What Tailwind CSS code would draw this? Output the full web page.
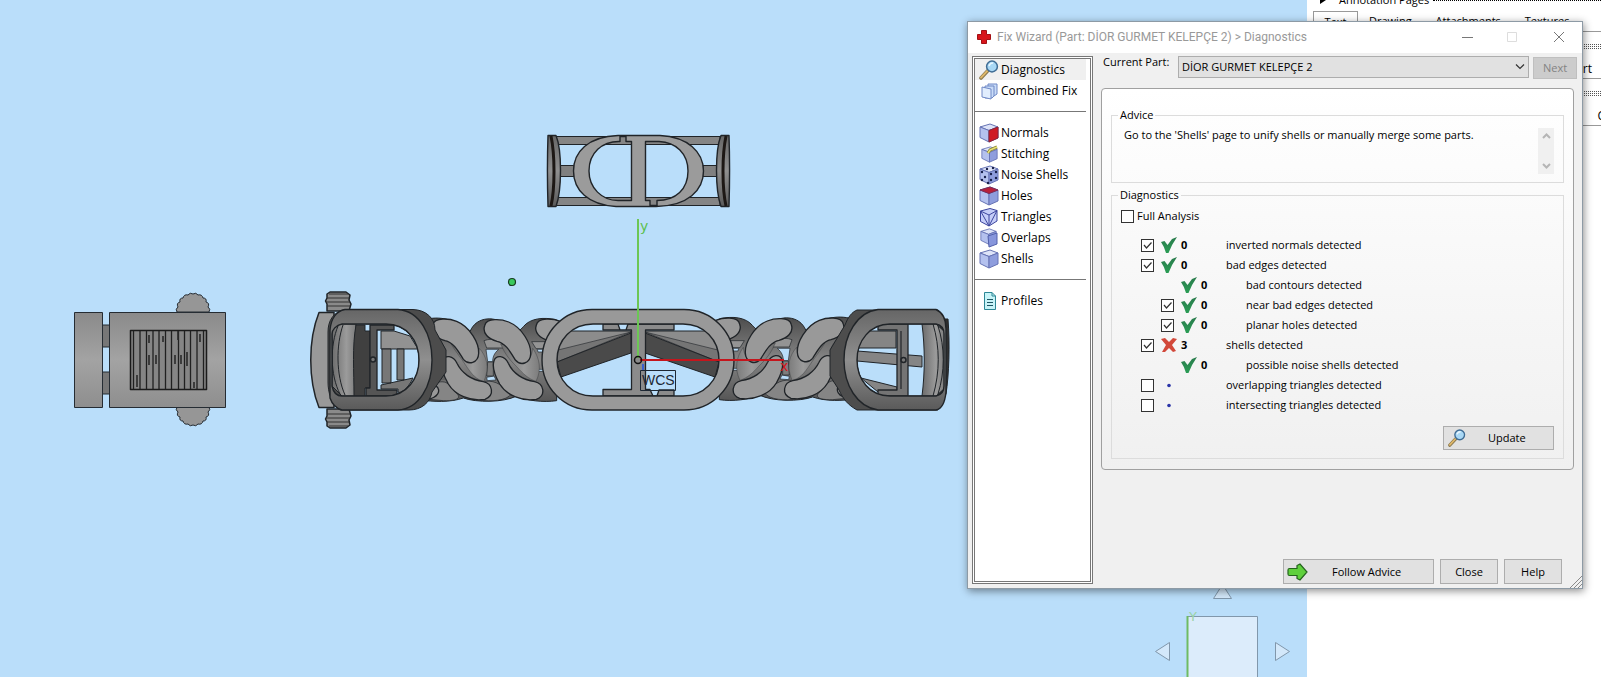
<!DOCTYPE html>
<html lang="en">
<head>
  <meta charset="UTF-8">
  <meta name="viewport" content="width=device-width, initial-scale=1.0">
  <title>Fix Wizard</title>
  <script src="https://cdn.jsdelivr.net/npm/@tailwindcss/browser@4"></script>
</head>
<body class="relative flex h-screen overflow-hidden bg-white font-['Open_Sans',sans-serif] text-[11px] leading-4 text-black">

  <!-- Shared icons -->
  <svg class="absolute size-0">
    <defs>
      <linearGradient id="metal" x1="0" y1="0" x2="0" y2="1">
        <stop offset="0" stop-color="#8a8a8a"/><stop offset=".5" stop-color="#a3a3a3"/><stop offset="1" stop-color="#8e8e8e"/>
      </linearGradient>
      <linearGradient id="dark" x1="0" y1="0" x2="0" y2="1">
        <stop offset="0" stop-color="#4c4c4c"/><stop offset=".5" stop-color="#858585"/><stop offset="1" stop-color="#565656"/>
      </linearGradient>
      <linearGradient id="round" x1="0" y1="0" x2="1" y2="0">
        <stop offset="0" stop-color="#6c6c6c"/><stop offset=".6" stop-color="#9b9b9b"/><stop offset="1" stop-color="#7c7c7c"/>
      </linearGradient>
      <linearGradient id="frame" x1="0" y1="0" x2="0" y2="1">
        <stop offset="0" stop-color="#666"/><stop offset=".5" stop-color="#8f8f8f"/><stop offset="1" stop-color="#5a5a5a"/>
      </linearGradient>
      <linearGradient id="tick" x1="0" y1="0" x2="0" y2="1">
        <stop offset="0" stop-color="#2a7a4c"/><stop offset="1" stop-color="#2a9d55"/>
      </linearGradient>
    </defs>
    <symbol id="i-lens" viewBox="0 0 20 20">
      <path d="M2 18 L8.500 11" stroke="#8b7a50" stroke-width="3.600" stroke-linecap="round"/>
      <path d="M2 17.600 L8.300 10.800" stroke="#e0b869" stroke-width="1.800" stroke-linecap="round"/>
      <circle cx="13" cy="6.500" r="5.400" fill="#a9d8f5" stroke="#3f6c94" stroke-width="1.500"/>
      <path d="M10 6 q1 -3 4 -3" fill="none" stroke="#eaf7ff" stroke-width="1.500"/>
    </symbol>
    <symbol id="i-cube" viewBox="0 0 20 20">
      <path d="M1 4 L11 1 L19 4 L10 7.500 Z" fill="#dde3f8" stroke="#6673b4"/>
      <path d="M1 4 L10 7.500 V19 L1 14.500 Z" fill="#b4c1ee" stroke="#6673b4"/>
      <path d="M10 7.500 L19 4 V15 L10 19 Z" fill="#8e9ddd" stroke="#6673b4"/>
    </symbol>
    <symbol id="i-check" viewBox="0 0 16 16">
      <path d="M0 5 L3.500 4 L6.500 8 L11 2 L16 0 Q11 7 7.500 16 H5 Q3.500 10 0 5 Z" fill="url(#tick)"/>
    </symbol>
    <symbol id="i-tick" viewBox="0 0 13 13">
      <path d="M3 6 L5.500 9 L10.500 3.500" fill="none" stroke="#333" stroke-width="1.200"/>
    </symbol>
  </svg>

  <!-- 3D view -->
  <main class="min-w-0 flex-1 bg-[#badefa]">
    <svg class="h-full w-full" viewBox="0 0 1307 677" preserveAspectRatio="xMinYMin slice" stroke-linejoin="round">
      <!-- Side view -->
      <g stroke="#252c33" stroke-width="1">
        <path id="knob" d="M177 312 q-2 -3 1 -5 q-2 -4 2 -5 q-1 -4 3 -4 q1 -4 5 -3 q2 -3 5 -1 q3 -2 5 1 q4 -1 5 3 q4 0 3 4 q4 1 2 5 q3 2 1 5 Z" fill="#969696"/>
        <use href="#knob" transform="translate(0 719) scale(1 -1)"/>
        <rect x="102" y="325" width="8" height="22" fill="#777"/>
        <rect x="102" y="372" width="8" height="22" fill="#777"/>
        <rect x="74.500" y="312.500" width="28" height="95" fill="url(#metal)"/>
        <rect x="109.500" y="312.500" width="116" height="95" fill="url(#metal)"/>
        <rect x="130.500" y="330.500" width="76" height="59" fill="#858585" stroke="#1b1b1b" stroke-width="1.500"/>
        <path d="M133.500 331V389M140 331V389M146.500 331V389M153 331V389M159 331V389M165.500 331V389M171.500 331V389M178.500 331V389M184.500 331V389M190.500 331V389M197 331V389M203.500 331V389" stroke="#202020" stroke-width="1.300"/>
        <path d="M149 355v10M156 355v9M175 355v9M181 355v9M137 375v12M149 335v8M163 336v6M187 352v14M178 331v9M194 382v6M200 334v8" stroke="#2a2a2a" stroke-width="1.600"/>
      </g>

      <!-- Front plate with the CD emblem -->
      <g stroke="#202428" stroke-width="1">
        <path d="M556 136.500H720V144.500H556ZM556 197.500H720V205.500H556Z" fill="#858585"/>
        <path d="M559 165.500H574V176.500H559ZM703 165.500H718V176.500H703Z" fill="#808080"/>
        <path fill-rule="evenodd" fill="#9b9b9b" stroke-width="1.400" d="M618 135.500H660C688 137 703.500 152 703.500 171C703.500 190 688 206 656 206.500H616C588 205 573.500 190 573.500 171C573.500 152 588 136.500 618 135.500ZM620 141.500C602 141 589 153 589 171C589 188 602 200.500 618 200.500H631.500V141.500H626V136.500H620ZM645.500 141.500V200.500H650V205.500H657V200.500C676 200.500 688 189 688 171C688 154 676 142 659 141.500Z"/>
        <path id="plate" d="M548 135.500H556C562 150 562 190 556 206.500H548C547.500 190 547.500 150 548 135.500Z" fill="url(#frame)" stroke-width="1.400"/>
        <path id="plateEdge" d="M551 136C555 155 555 188 551 206" fill="none" stroke="#1d1815" stroke-width="3"/>
        <use href="#plate" transform="translate(1277 0) scale(-1 1)"/>
        <use href="#plateEdge" transform="translate(1277 0) scale(-1 1)"/>
      </g>

      <!-- Chain half, mirrored for the right side -->
      <g id="chain" transform="translate(290 270) scale(.33333)" stroke="#202428" stroke-width="3">
        <path d="M400 150C450 135 500 150 540 185C560 135 620 140 650 165C690 190 690 180 700 170C720 145 760 140 800 150V392C760 398 710 392 680 378C640 398 560 398 520 384C480 398 430 395 390 390Z" fill="url(#dark)"/>
        <path d="M415 225C425 180 455 210 468 240V330H415Z" fill="#5f5f5f" stroke="none"/>
        <path d="M582 212C610 202 640 210 640 234H590ZM725 215H790V236H738Z" fill="#949494" stroke-width="2"/>
        <path d="M588 238H626C612 250 608 262 608 275H593ZM590 322L612 318L618 330L592 332ZM742 238H762V246H744ZM744 298H762V304H744Z" fill="#badefa" stroke-width="2"/>
        <path d="M593 276H610V318H590Z" fill="#7d7d7d" stroke-width="2"/>
        <path d="M530 290C510 260 490 235 484 222C505 226 515 250 525 270C545 285 565 275 568 235C590 260 600 290 582 334C560 330 545 312 530 290Z" fill="url(#round)" stroke-width="1"/>
        <path d="M680 290C650 262 640 240 632 222C660 226 672 250 682 270C700 285 725 275 728 235C750 265 755 300 738 334C715 326 700 312 680 290Z" fill="url(#round)" stroke-width="1"/>
        <path d="M430 340C480 325 475 350 500 370C515 385 500 393 460 392L420 388ZM585 334C620 330 640 350 664 372C650 393 600 395 570 390Z" fill="#858585" stroke-width="2"/>
        <g fill="#999" stroke-width="4">
          <path id="linkTop" d="M428 165C433 140 480 146 500 154C540 170 568 220 566 250C565 280 535 286 520 268C503 240 490 217 465 212C440 205 420 188 428 165Z"/>
          <path id="linkLow" d="M458 272C464 254 490 255 501 280C515 310 545 330 580 335C608 341 615 376 585 388C540 395 495 375 475 342C458 312 452 290 458 272Z"/>
          <use href="#linkTop" transform="translate(156 2)"/>
          <use href="#linkLow" transform="translate(154 0)"/>
          <use href="#linkTop" transform="translate(311 0)"/>
          <use href="#linkLow" transform="translate(310 0)"/>
          <path d="M380 372C385 325 440 335 446 360C448 378 420 392 395 391Z"/>
        </g>
      </g>
      <use href="#chain" transform="translate(1276 -1) scale(-1 1)"/>

      <!-- Center link -->
      <g stroke="#202428" stroke-width="1">
        <rect x="556" y="322" width="164" height="76" rx="38" fill="#badefa"/>
        <g id="rods">
          <path d="M558 377C554 362 556 345 568 331H631V352Z" fill="#8c8c8c"/>
          <path d="M558 350L631 332L557 362Z" fill="#757575" stroke-width=".6"/>
          <path d="M557 362L631 333V353L561 377Z" fill="#4a4a4a"/>
        </g>
        <use href="#rods" transform="translate(1276 0) scale(-1 1)"/>
        <path d="M603 324H618L620 330H626L628 324H674V330H645.500V389.500H650L653 396H657L659 390H674V396H603V389.500H631.500V330H603Z" fill="#8b8b8b" stroke-width="1.300"/>
        <path fill-rule="evenodd" d="M592 309.500H684C712 309.500 734 332 734 360C734 388 712 410 684 410H592C564 410 542 388 542 360C542 332 564 309.500 592 309.500ZM593 324C572 324 557 340 557 360C557 380 572 396 593 396H683C704 396 719 380 719 360C719 340 704 324 683 324Z" fill="#999" stroke-width="1.400"/>
      </g>

      <!-- Left clasp -->
      <g stroke="#202428" stroke-width="1">
        <g id="screw">
          <path d="M330 292H346L350 295L349 300L351 304L349 311H327V304L325.500 301L327 298V294Z" fill="#8a8a8a" stroke-width="1.500"/>
          <path d="M329 294H348M327 298H349M326 302H350M327 306H350" stroke="#333"/>
        </g>
        <use href="#screw" transform="translate(0 720) scale(1 -1)"/>
        <path d="M319 312.500H334V407.500H319C308 380 308 340 319 312.500Z" fill="#999" stroke-width="1.500"/>
        <path d="M345 309.500H413C426 310 435 318 435 330L446 350V372L432 392C430 403 421 410 409 410H340C331 404 328 392 328 382V332C328 321 333 312 345 309.500Z" fill="#4c4c4c"/>
        <path d="M332 324H386C407 324 419 342 419 360C419 380 407 396 386 396H345L332 386Z" fill="#badefa"/>
        <path d="M332 330L340 324H356V396H342L332 386Z" fill="url(#round)"/>
        <path d="M338 326C330 345 330 375 340 394M343 325C336 345 336 375 345 395" fill="none"/>
        <path d="M356 325H365V331H370V388H365V396H354C354 372 352 346 356 325Z" fill="#404040"/>
        <path d="M370 325H394V330H377V390H397V396H366V388H370Z" fill="#555" stroke-width="1.300"/>
        <path d="M381 331H394L410 336L418 349H381Z" fill="#929292"/>
        <path d="M382 349H391V383H382ZM397 349H404V380H397ZM381 385L413 378C408 389 400 394 398 392V389H381Z" fill="#777"/>
        <circle cx="373" cy="359.500" r="2.500" fill="#777" stroke-width="1.500"/>
        <path fill-rule="evenodd" d="M345 309.500H398C420 311 432 335 432 360C432 386 419 409 398 410H342C335 408 332 404 330 398V330C331 318 337 311 345 309.500ZM342 324C336 325 332 330 332 334V386C333 391 336 396 342 396H386C407 396 419 378 419 360C419 341 407 324 386 324Z" fill="url(#frame)" stroke-width="1.400"/>
      </g>

      <!-- Right clasp -->
      <g stroke="#202428" stroke-width="1">
        <path d="M940 319H948C950 345 949 375 946 394L938 407Z" fill="#303030"/>
        <path d="M857 310H938V410H857C848 405 843 399 839 390L830 376V350L845 325C848 317 852 312 857 310Z" fill="#4d4d4d"/>
        <path d="M890 324H938V396H890C870 396 857 380 857 360C857 341 870 324 890 324Z" fill="#badefa"/>
        <path d="M866 331H896V348H858ZM857 351L922 356V367L857 361ZM861 378L897 387V392H878Z" fill="#858585"/>
        <path d="M878 324H908V396H878V390H897V330H878Z" fill="#747474" stroke-width="1.300"/>
        <path d="M901 331V389" stroke-width="1.200"/>
        <circle cx="903.500" cy="360" r="2.500" fill="#777" stroke-width="1.500"/>
        <path d="M922 324H936L945 332V388L936 396H922C925 372 925 348 922 324Z" fill="url(#round)"/>
        <path d="M933 324C940 347 940 372 933 396M938 326C945 347 945 372 938 394" fill="none"/>
        <path fill-rule="evenodd" d="M878 309.500H936C944 313 946 320 946 329V392C945 402 942 409 936 410H878C857 407 844 385 844 360C844 335 857 312 878 309.500ZM890 324C870 324 857 341 857 360C857 380 870 396 890 396H936C941 395 944 391 944 386V334C944 329 941 325 936 324Z" fill="url(#frame)" stroke-width="1.400"/>
      </g>

      <!-- Axes -->
      <path d="M638 219V358" stroke="#6cc655" stroke-width="2"/>
      <path d="M640 360H784" stroke="#c5151c" stroke-width="2"/>
      <circle cx="638" cy="360" r="3.500" fill="none" stroke="#111" stroke-width="1.500"/>
      <circle cx="512" cy="282" r="3.500" fill="#39c95d" stroke="#173b1f" stroke-width="1.200"/>
      <path d="M643 364V370" stroke="#3a60d0" stroke-width="2"/>
      <rect x="640.500" y="370.500" width="35" height="20" fill="none" stroke="#1d2733"/>
      <text x="642" y="385" class="font-['Liberation_Sans',sans-serif] text-[14px]" fill="#1d2733">WCS</text>
      <text x="640" y="231" class="font-['DejaVu_Sans',sans-serif] text-[14px]" fill="#5cc04e">y</text>
      <text x="780" y="371" class="font-['DejaVu_Sans',sans-serif] text-[14px]" fill="#d01820">x</text>

      <!-- View cube -->
      <g fill="#d3e8fa" stroke="#8197ab">
        <path d="M1155.500 651.500L1169.500 642.500V660.500ZM1289.500 651.500L1275.500 642.500V660.500ZM1213.500 598.500H1231.500L1222.500 584.500Z"/>
        <rect x="1187.500" y="616.500" width="70" height="70" fill="#dcecfb"/>
      </g>
      <path d="M1187.500 616V677" stroke="#6fbb62" stroke-width="2"/>
      <text x="1189" y="621" class="font-['DejaVu_Sans',sans-serif] text-[13px]" fill="#9bd3a5">Y</text>
    </svg>
  </main>

  <!-- Part pages panel -->
  <aside class="w-[294px] shrink-0 overflow-hidden">
    <div class="-mt-2 flex h-[19px] items-start gap-1 pl-3">
      <svg class="mt-1 size-2" viewBox="0 0 8 8"><path d="M1 0 L7 4 L1 8 Z"/></svg>
      <span class="pl-2">Annotation Pages</span>
      <span class="mt-2 flex-1 border-t border-dotted border-black"></span>
    </div>
    <div class="flex h-[21px] items-center border-b border-[#999] pl-[6px]">
      <button class="h-full w-[45px] border border-b-0 border-[#999]">Text</button>
      <button class="ml-[11px]">Drawing</button>
      <button class="ml-[24px]">Attachments</button>
      <button class="ml-[24px]">Textures</button>
    </div>
    <div class="flex h-[47px] flex-col items-end border-b border-[#999] pt-3 text-[12px]">
      <div class="w-full border-t border-dotted border-[#555]"></div>
      <div class="mt-px w-full border-t border-dotted border-[#555]"></div>
      <div class="mt-px w-full border-t border-dotted border-[#555]"></div>
      <span class="mt-3 pr-[9px]">Part</span>
    </div>
    <div class="flex h-[47px] flex-col items-end border-b border-[#999] pt-3 text-[12px]">
      <div class="w-full border-t border-dotted border-[#555]"></div>
      <div class="mt-px w-full border-t border-dotted border-[#555]"></div>
      <div class="mt-px w-full border-t border-dotted border-[#555]"></div>
      <span class="mt-3 -mr-1">C</span>
    </div>
  </aside>

  <!-- Fix Wizard window -->
  <section class="absolute top-[21px] right-[18px] w-[616px] border border-[#8d9aa5] bg-[#f0f0f0] shadow-[1px_2px_8px_rgba(0,0,0,0.45)]">
    <header class="flex h-[31px] items-center bg-white pr-[17px] pb-px pl-[9px] text-[#999]">
      <svg class="mr-[6px] size-[14px]" viewBox="0 0 14 14"><path d="M4.500 .5H9.500V4.500H13.500V9.500H9.500V13.500H4.500V9.500H.5V4.500H4.500Z" fill="#d8151b" stroke="#a31014"/></svg>
      <h1 class="flex-1 font-['Roboto',sans-serif] text-[12px]">Fix Wizard (Part: DİOR GURMET KELEPÇE 2) &gt; Diagnostics</h1>
      <button class="mr-[34px]" aria-label="Minimize"><svg class="h-3 w-[11px]" viewBox="0 0 11 12"><path d="M0 6.500H11" stroke="#777"/></svg></button>
      <button class="mr-[36px]" aria-label="Maximize"><svg class="size-[10px]" viewBox="0 0 10 10"><path d="M.5 .5H9.500V9.500H.5Z" fill="none" stroke="#ddd"/></svg></button>
      <button aria-label="Close window"><svg class="size-[12px]" viewBox="0 0 12 12"><path d="M1 1L11 11M11 1L1 11" stroke="#777"/></svg></button>
    </header>

    <div class="flex pt-[3px] pb-1 pl-1">
      <!-- Pages -->
      <nav class="w-[121px] shrink-0 border-[3px] border-double border-[#777] bg-white pr-1 text-[12px]">
        <a href="#" class="flex h-[21px] items-center gap-[2px] bg-[#f0f0f0] pl-1"><svg class="size-[20px]"><use href="#i-lens"/></svg>Diagnostics</a>
        <a href="#" class="flex h-[21px] items-center gap-[2px] pl-1">
          <svg class="size-[20px]" viewBox="0 0 20 20"><g fill="#c9dcf8" stroke="#7089c6"><path d="M9 3H18V13L15 15H9Z"/><path d="M6 5H15V15L13 17H6Z"/><path d="M3 6L12 8V18L3 16Z" fill="#e1edfd"/></g></svg>Combined Fix</a>
        <hr class="mt-[10px] mb-[10px] border-[#777]">
        <a href="#" class="flex h-[21px] items-center gap-[2px] pl-1">
          <svg class="size-[20px]" viewBox="0 0 20 20"><use href="#i-cube"/><path d="M10 7.500L19 4V15L10 19Z" fill="#cf1a24" stroke="#8d2338"/></svg>Normals</a>
        <a href="#" class="flex h-[21px] items-center gap-[2px] pl-1">
          <svg class="size-[20px]" viewBox="0 0 20 20"><use href="#i-cube" x="2" y="2" width="17" height="17"/><path d="M9 9L11 6L18 3" fill="none" stroke="#8a8530" stroke-width="3"/><path d="M9 9L11 6L18 3" fill="none" stroke="#e8e27a" stroke-width="1.500"/></svg>Stitching</a>
        <a href="#" class="flex h-[21px] items-center gap-[2px] pl-1">
          <svg class="size-[20px]" viewBox="0 0 20 20"><use href="#i-cube"/><g fill="#18204a"><circle cx="3" cy="7" r="1.200"/><circle cx="8" cy="4" r="1.200"/><circle cx="14" cy="3" r="1.200"/><circle cx="6" cy="12" r="1.200"/><circle cx="3" cy="15" r="1.200"/><circle cx="12" cy="9" r="1.200"/><circle cx="17" cy="7" r="1.200"/><circle cx="12" cy="15" r="1.200"/><circle cx="17" cy="13" r="1.200"/><circle cx="9" cy="18" r="1.200"/></g></svg>Noise Shells</a>
        <a href="#" class="flex h-[21px] items-center gap-[2px] pl-1">
          <svg class="size-[20px]" viewBox="0 0 20 20"><use href="#i-cube"/><path d="M1 4L11 1L19 4L10 7.500Z" fill="#b8203a" stroke="#7c2c58"/></svg>Holes</a>
        <a href="#" class="flex h-[21px] items-center gap-[2px] pl-1">
          <svg class="size-[20px]" viewBox="0 0 20 20"><path d="M1.500 4L11 1.500L18 3.500V14L10 19L1.500 14.500Z" fill="#c5cdf8" stroke="#3d469e"/><path d="M1.500 4L10 8L18 3.500M10 8V19M1.500 4L10 19L18 3.500" fill="none" stroke="#3d469e"/></svg>Triangles</a>
        <a href="#" class="flex h-[21px] items-center gap-[2px] pl-1">
          <svg class="size-[20px]" viewBox="0 0 20 20"><use href="#i-cube" x="1" y="0" width="17" height="17"/><path d="M9 8L18 5V16L10 19Z" fill="#8796dc" stroke="#5361ab"/></svg>Overlaps</a>
        <a href="#" class="flex h-[21px] items-center gap-[2px] pl-1"><svg class="size-[20px]"><use href="#i-cube"/></svg>Shells</a>
        <hr class="mt-[10px] mb-[10px] border-[#777]">
        <a href="#" class="flex h-[21px] items-center gap-[2px] pl-1">
          <svg class="size-[20px]" viewBox="0 0 20 20"><path d="M5.500 1.500H13L16.500 5V18.500H5.500Z" fill="#c8f4f8" stroke="#2d8795"/><path d="M13 1.500V5H16.500" fill="none" stroke="#2d8795"/><path d="M8 8.500H14M8 11.500H14M8 14.500H14" stroke="#1e5663"/></svg>Profiles</a>
      </nav>

      <!-- Diagnostics page -->
      <div class="ml-2 min-w-0 flex-1 pr-[5px]">
        <div class="flex items-start">
          <label for="part" class="w-[77px] pl-[2px] leading-3">Current Part:</label>
          <div class="relative flex-1">
            <select id="part" class="h-[22px] w-full appearance-none border border-[#adadad] bg-[#e1e1e1] pl-[3px] leading-5">
              <option>DİOR GURMET KELEPÇE 2</option>
            </select>
            <svg class="pointer-events-none absolute top-2 right-1 h-[6px] w-[10px]" viewBox="0 0 10 6"><path d="M1 .5L5 4.500L9 .5" fill="none" stroke="#333" stroke-width="1.200"/></svg>
          </div>
          <button disabled class="mt-px ml-1 h-[22px] w-[44px] border border-[#bfbfbf] bg-[#ccc] text-[#838383]">Next</button>
        </div>

        <div class="mt-[9px] mr-[3px] rounded border border-[#a0a0a0] bg-linear-to-b from-white to-[#f0f0f0] px-[9px] pt-[18px] pb-[10px]">
          <fieldset class="border border-[#dcdcdc] pb-2">
            <legend class="ml-[6px] px-[2px]">Advice</legend>
            <div class="flex items-start justify-between pt-1 pr-[9px] pl-3">
              <p>Go to the 'Shells' page to unify shells or manually merge some parts.</p>
              <div class="mt-px flex h-[46px] w-4 flex-col items-center justify-between bg-[#f0f0f0] py-1">
                <button aria-label="Scroll up"><svg class="h-2 w-[9px]" viewBox="0 0 9 8"><path d="M1 6L4.500 2.500L8 6" fill="none" stroke="#b5b5b5" stroke-width="2"/></svg></button>
                <button aria-label="Scroll down"><svg class="h-2 w-[9px]" viewBox="0 0 9 8"><path d="M1 2L4.500 5.500L8 2" fill="none" stroke="#b5b5b5" stroke-width="2"/></svg></button>
              </div>
            </div>
          </fieldset>

          <fieldset class="mt-1 border border-[#dcdcdc] pb-2">
            <legend class="ml-[6px] px-[2px]">Diagnostics</legend>
            <label class="mt-[3px] flex h-5 items-center gap-[3px] pl-[9px]">
              <input type="checkbox" class="size-[13px] appearance-none border border-[#333] bg-white">Full Analysis
            </label>

            <div class="mt-[9px]">
              <label class="flex h-5 items-center pl-[29px]">
                <span class="grid"><input type="checkbox" checked class="peer col-start-1 row-start-1 size-[13px] appearance-none border border-[#333] bg-white"><svg class="col-start-1 row-start-1 hidden size-[13px] peer-checked:block"><use href="#i-tick"/></svg></span>
                <svg class="ml-[7px] size-4"><use href="#i-check"/></svg><b class="ml-1 w-[45px]">0</b>inverted normals detected
              </label>
              <label class="flex h-5 items-center pl-[29px]">
                <span class="grid"><input type="checkbox" checked class="peer col-start-1 row-start-1 size-[13px] appearance-none border border-[#333] bg-white"><svg class="col-start-1 row-start-1 hidden size-[13px] peer-checked:block"><use href="#i-tick"/></svg></span>
                <svg class="ml-[7px] size-4"><use href="#i-check"/></svg><b class="ml-1 w-[45px]">0</b>bad edges detected
              </label>
              <div class="flex h-5 items-center pl-[69px]">
                <svg class="size-4"><use href="#i-check"/></svg><b class="ml-1 w-[45px]">0</b>bad contours detected
              </div>
              <label class="flex h-5 items-center pl-[49px]">
                <span class="grid"><input type="checkbox" checked class="peer col-start-1 row-start-1 size-[13px] appearance-none border border-[#333] bg-white"><svg class="col-start-1 row-start-1 hidden size-[13px] peer-checked:block"><use href="#i-tick"/></svg></span>
                <svg class="ml-[7px] size-4"><use href="#i-check"/></svg><b class="ml-1 w-[45px]">0</b>near bad edges detected
              </label>
              <label class="flex h-5 items-center pl-[49px]">
                <span class="grid"><input type="checkbox" checked class="peer col-start-1 row-start-1 size-[13px] appearance-none border border-[#333] bg-white"><svg class="col-start-1 row-start-1 hidden size-[13px] peer-checked:block"><use href="#i-tick"/></svg></span>
                <svg class="ml-[7px] size-4"><use href="#i-check"/></svg><b class="ml-1 w-[45px]">0</b>planar holes detected
              </label>
              <label class="flex h-5 items-center pl-[29px]">
                <span class="grid"><input type="checkbox" checked class="peer col-start-1 row-start-1 size-[13px] appearance-none border border-[#333] bg-white"><svg class="col-start-1 row-start-1 hidden size-[13px] peer-checked:block"><use href="#i-tick"/></svg></span>
                <svg class="ml-[7px] size-4" viewBox="0 0 16 16"><path d="M0 2L4 1L8 5L12 1L16 2L11 8L15 14L12 15L8 11L4 15H1L5 8Z" fill="#d2483a"/></svg><b class="ml-1 w-[45px]">3</b>shells detected
              </label>
              <div class="flex h-5 items-center pl-[69px]">
                <svg class="size-4"><use href="#i-check"/></svg><b class="ml-1 w-[45px]">0</b>possible noise shells detected
              </div>
              <label class="flex h-5 items-center pl-[29px]">
                <input type="checkbox" class="size-[13px] appearance-none border border-[#333] bg-white">
                <svg class="mr-[49px] ml-[7px] size-4" viewBox="0 0 16 16"><circle cx="8" cy="8.500" r="1.800" fill="#2b35a8"/></svg>overlapping triangles detected
              </label>
              <label class="flex h-5 items-center pl-[29px]">
                <input type="checkbox" class="size-[13px] appearance-none border border-[#333] bg-white">
                <svg class="mr-[49px] ml-[7px] size-4" viewBox="0 0 16 16"><circle cx="8" cy="8.500" r="1.800" fill="#2b35a8"/></svg>intersecting triangles detected
              </label>
            </div>

            <div class="mt-[11px] flex justify-end pr-[9px]">
              <button class="flex h-6 w-[111px] items-center border border-[#adadad] bg-[#e1e1e1] pl-1"><svg class="size-[18px]"><use href="#i-lens"/></svg><span class="ml-[22px]">Update</span></button>
            </div>
          </fieldset>
        </div>

        <div class="mt-[89px] flex justify-end gap-[6px] pr-[15px]">
          <button class="flex h-[25px] w-[151px] items-center border border-[#adadad] bg-[#e1e1e1] pl-[3px]">
            <svg class="h-[18px] w-[21px]" viewBox="0 0 21 18"><path d="M2.500 5.500H10V2.500L13 1L20 9L13 17L10 15.500V12.500H2.500Q1 12.500 1 11V7Q1 5.500 2.500 5.500Z" fill="#5fd03c" stroke="#24641d" stroke-width="1.200"/></svg>
            <span class="ml-6">Follow Advice</span>
          </button>
          <button class="h-[25px] w-[58px] border border-[#adadad] bg-[#e1e1e1]">Close</button>
          <button class="h-[25px] w-[58px] border border-[#adadad] bg-[#e1e1e1]">Help</button>
        </div>
      </div>
    </div>
    <!-- Resize grip -->
    <svg class="absolute right-0 bottom-0 size-3" viewBox="0 0 12 12"><path d="M0 12L12 0M4 12L12 4M8 12L12 8" stroke="#8a8a8a"/></svg>
  </section>

</body>
</html>
